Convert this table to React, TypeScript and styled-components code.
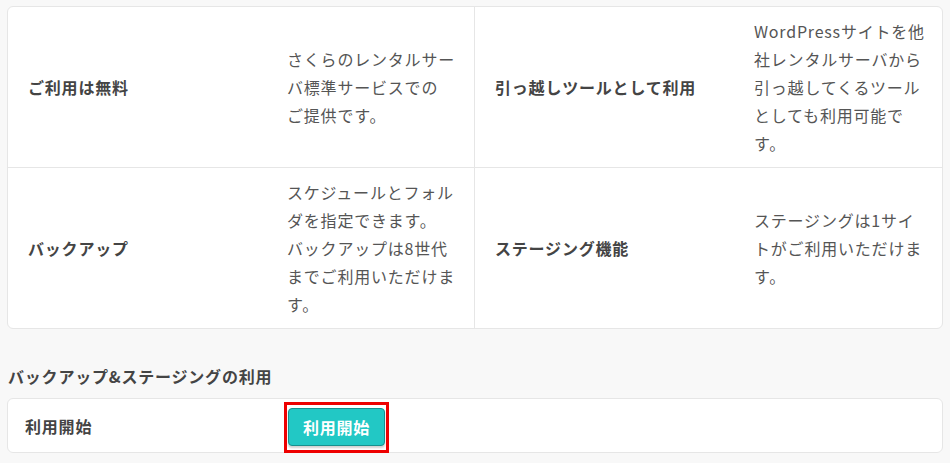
import React from "react";
import styled, { createGlobalStyle } from "styled-components";

const Global = createGlobalStyle`
  html, body {
    margin: 0;
    padding: 0;
    background: #f8f8f8;
  }
  body {
    font-family: "Noto Sans CJK JP", "Noto Sans", sans-serif;
    color: #555;
  }
`;

const Page = styled.div`
  padding: 6px 7px 0 7px;
  width: 950px;
  box-sizing: border-box;
`;

const Card = styled.div`
  background: #fff;
  border: 1px solid #e6e6e6;
  border-radius: 6px;
  overflow: hidden;
`;

const Grid = styled.div`
  display: grid;
  grid-template-columns: 279px 188px 279px 1fr;
`;

const Cell = styled.div<{ $divider?: boolean; $bottom?: boolean }>`
  display: flex;
  align-items: center;
  box-sizing: border-box;
  font-size: 16px;
  line-height: 28px;
  letter-spacing: 0.05em;
  border-right: ${(p) => (p.$divider ? "1px solid #e6e6e6" : "none")};
  border-bottom: ${(p) => (p.$bottom ? "1px solid #e6e6e6" : "none")};
`;

const Label = styled(Cell)`
  padding: 10px 20px;
  font-weight: 700;
  color: #444;
`;

const Desc = styled(Cell)`
  padding: 10px 15px 10px 0;
  color: #555;
`;

const DescText = styled.p`
  margin: 0;
`;

const SectionTitle = styled.h2`
  margin: 33px 0 8px 1px;
  font-size: 16px;
  line-height: 28px;
  font-weight: 700;
  letter-spacing: 0.05em;
  color: #444;
`;

const ActionCard = styled.div`
  display: flex;
  align-items: flex-start;
  height: 55px;
  box-sizing: border-box;
  background: #fff;
  border: 1px solid #e6e6e6;
  border-radius: 6px;
`;

const ActionLabel = styled.div`
  width: 276px;
  box-sizing: border-box;
  padding-left: 17px;
  align-self: center;
  font-size: 16px;
  line-height: 28px;
  font-weight: 700;
  letter-spacing: 0.05em;
  color: #444;
`;

const Highlight = styled.div`
  margin-top: 3px;
  border: 3px solid #ee0000;
  padding: 3px 1px 4px 1px;
  line-height: 0;
`;

const StartButton = styled.button`
  width: 97px;
  height: 38px;
  box-sizing: border-box;
  background: #22c8c5;
  border: 1px solid #17908e;
  border-radius: 4px;
  box-shadow: 0 2px 2px rgba(0, 0, 0, 0.18);
  color: #fff;
  font-family: "Noto Sans CJK JP", sans-serif;
  font-size: 16px;
  font-weight: 700;
  letter-spacing: 0.05em;
  padding: 0;
  cursor: pointer;
`;

type Item = { label: string; lines: string[] };

const rows: Item[][] = [
  [
    { label: "ご利用は無料", lines: ["さくらのレンタルサー", "バ標準サービスでの", "ご提供です。"] },
    {
      label: "引っ越しツールとして利用",
      lines: ["WordPressサイトを他", "社レンタルサーバから", "引っ越してくるツール", "としても利用可能で", "す。"],
    },
  ],
  [
    {
      label: "バックアップ",
      lines: ["スケジュールとフォル", "ダを指定できます。", "バックアップは8世代", "までご利用いただけま", "す。"],
    },
    { label: "ステージング機能", lines: ["ステージングは1サイ", "トがご利用いただけま", "す。"] },
  ],
];

function Lines({ lines }: { lines: string[] }) {
  return (
    <DescText>
      {lines.map((l, i) => (
        <React.Fragment key={i}>
          {l}
          {i < lines.length - 1 && <br />}
        </React.Fragment>
      ))}
    </DescText>
  );
}

export default function App() {
  return (
    <>
      <Global />
      <Page>
        <Card>
          <Grid>
            {rows.map((row, ri) => (
              <React.Fragment key={ri}>
                <Label $bottom={ri === 0}>{row[0].label}</Label>
                <Desc $bottom={ri === 0} $divider>
                  <Lines lines={row[0].lines} />
                </Desc>
                <Label $bottom={ri === 0}>{row[1].label}</Label>
                <Desc $bottom={ri === 0}>
                  <Lines lines={row[1].lines} />
                </Desc>
              </React.Fragment>
            ))}
          </Grid>
        </Card>
        <SectionTitle>バックアップ&amp;ステージングの利用</SectionTitle>
        <ActionCard>
          <ActionLabel>利用開始</ActionLabel>
          <Highlight>
            <StartButton>利用開始</StartButton>
          </Highlight>
        </ActionCard>
      </Page>
    </>
  );
}
